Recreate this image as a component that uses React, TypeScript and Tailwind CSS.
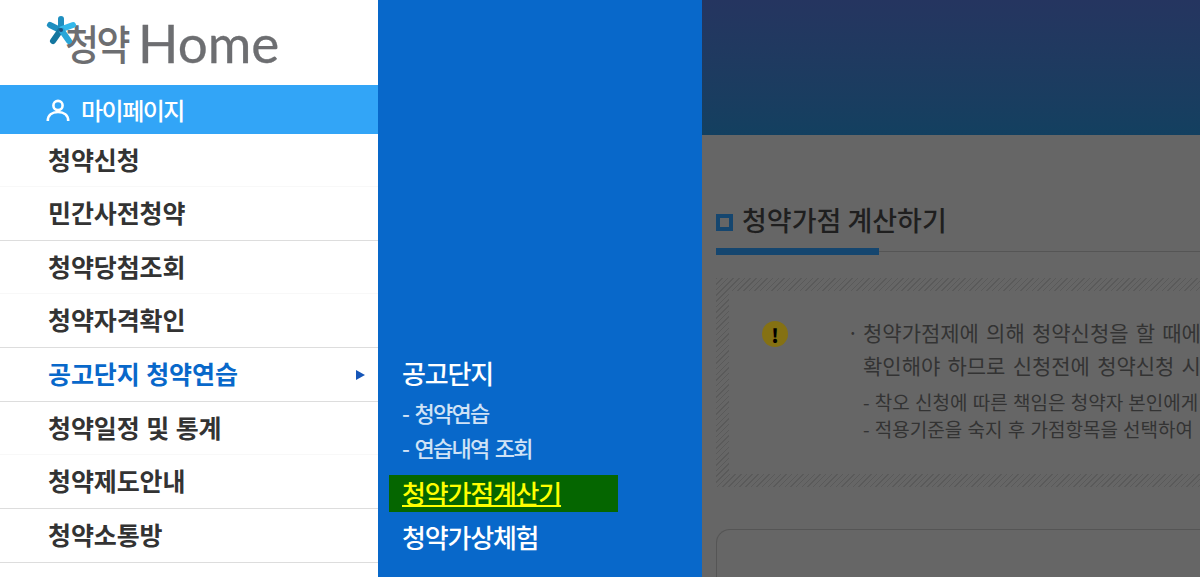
const KR = "font-['Noto_Sans_CJK_KR','Noto_Sans',sans-serif]";

const menu = [
  { label: '청약신청', h: 'h-[53px]', line: 'border-[#f8f8f8]' },
  { label: '민간사전청약', h: 'h-[54px]', line: 'border-[#dddddd]' },
  { label: '청약당첨조회', h: 'h-[53px]', line: 'border-[#f8f8f8]' },
  { label: '청약자격확인', h: 'h-[54px]', line: 'border-[#dddddd]' },
  { label: '공고단지 청약연습', h: 'h-[54px]', line: 'border-[#dddddd]', active: true },
  { label: '청약일정 및 통계', h: 'h-[53px]', line: 'border-[#f8f8f8]' },
  { label: '청약제도안내', h: 'h-[54px]', line: 'border-[#dddddd]' },
  { label: '청약소통방', h: 'h-[54px]', line: 'border-[#dddddd]' },
];

function Logo() {
  return (
    <div className="relative flex h-[85px] items-start pl-[65px] pt-[13px] text-[#6d6e71]">
      <div className={`mt-[6px] w-[64px] origin-bottom scale-y-[1.12] text-[37px] font-medium leading-[52px] tracking-[-2.500px] whitespace-nowrap ${KR}`}>청약</div>
      <div className="ml-[9px] text-[53px] font-normal leading-[60px] font-['Lato','Noto_Sans',sans-serif] [-webkit-text-stroke:0.3px_#6d6e71]">
        Home
      </div>
      <svg className="absolute left-[46px] top-[15px]" width="32" height="32" viewBox="0 0 32 32">
        <g strokeWidth="6" strokeLinecap="round">
          <path d="M15 4 L15 14" stroke="#1f8fc0" />
          <path d="M4 10 L14 15" stroke="#1f8fc0" />
          <path d="M27 10 L16 14" stroke="#33b8ea" />
          <path d="M7 26 L14 16" stroke="#14769f" />
          <path d="M23 26 L16 16" stroke="#2aa6d8" />
        </g>
        <circle cx="15" cy="15" r="2" fill="#1d4f80" />
      </svg>
    </div>
  );
}

function Sidebar() {
  return (
    <div className="w-[378px] shrink-0 bg-white">
      <Logo />
      <div className={`flex h-[49px] items-center bg-[#32a5f7] pl-[46px] text-white ${KR}`}>
        <svg width="24" height="26" viewBox="0 0 24 26" fill="none" stroke="white" strokeWidth="2.6">
          <circle cx="12" cy="8.5" r="4.6" />
          <path d="M1.800 24c0-5.800 4.400-9 10.200-9s10.200 3.200 10.200 9" />
        </svg>
        <span className="ml-[11px] text-[24px] font-medium tracking-[-1.5px]">마이페이지</span>
      </div>
      {menu.map((m) => (
        <div
          key={m.label}
          className={`flex items-center justify-between border-b pl-[48px] pr-[13px] ${m.h} ${m.line} ${KR}`}
        >
          <span
            className={`pb-[1px] text-[25px] font-bold tracking-[-0.1px] [word-spacing:1px] ${m.active ? 'text-[#0868ca]' : 'text-[#333333]'}`}
          >
            {m.label}
          </span>
          {m.active && (
            <svg width="9" height="10" viewBox="0 0 9 10">
              <path d="M0 0 L9 5 L0 10 Z" fill="#1656b8" />
            </svg>
          )}
        </div>
      ))}
    </div>
  );
}

function SubPanel() {
  return (
    <div className={`flex w-[324px] shrink-0 flex-col bg-[#0868ca] pl-[11px] pt-[352px] text-white ${KR}`}>
      <div className="flex h-[40px] items-center pl-[13px] text-[26px] font-medium tracking-[-1.2px]">공고단지</div>
      <div className="mt-[3px] flex h-[35px] items-center pl-[13px] text-[22px] font-medium tracking-[-1.7px] text-[#cfe2f6] [word-spacing:3px]">- 청약연습</div>
      <div className="flex h-[35px] items-center pl-[13px] text-[22px] font-medium tracking-[-1.7px] text-[#cfe2f6] [word-spacing:3px]">- 연습내역 조회</div>
      <div className="mt-[10px] flex h-[37px] w-[229px] items-center bg-[#056600] pb-[3px] pl-[13px] text-[26px] font-medium tracking-[-1.2px] text-[#ffff00] underline underline-offset-1">
        청약가점계산기
      </div>
      <div className="flex h-[48px] items-center pl-[13px] text-[26px] font-medium tracking-[-1.2px]">청약가상체험</div>
    </div>
  );
}

function Content() {
  return (
    <div className={`min-w-0 flex-1 overflow-hidden bg-[#666666] ${KR}`}>
      <div className="h-[135px] bg-gradient-to-b from-[#253560] to-[#134060]" />
      <div className="w-[700px] pl-[14px]">
        <div className="mt-[67px] flex h-[46px] items-center gap-[9px] pb-[6px]">
          <div className="h-[17px] w-[17px] border-[4px] border-[#15466f]" />
          <span className="mb-[3px] text-[27px] font-medium tracking-[0px] text-[#1f1f1f]">청약가점 계산하기</span>
        </div>
        <div className="relative h-[7px]">
          <div className="absolute left-0 right-0 top-[3px] h-px bg-[#555555]" />
          <div className="absolute left-0 top-0 h-[7px] w-[163px] bg-[#15466f]" />
        </div>
        <div className="mt-[23px] h-[209px] bg-[repeating-linear-gradient(135deg,#5a5a5a_0,#5a5a5a_1px,#666666_1px,#666666_4px)] p-[13px]">
          <div className="flex h-full bg-[#666666] pt-[25px]">
            <div className="ml-[33px] mt-[5px] flex h-[26px] w-[26px] shrink-0 items-center justify-center rounded-full bg-[#857113] text-[19px] font-black leading-none text-black">
              !
            </div>
            <div className="ml-[59px] whitespace-nowrap text-[#333333]">
              <div className="flex text-[21px] leading-[33px] [word-spacing:2.5px]">
                <span className="w-[16px]">·</span>
                <div>
                  <div>청약가점제에 의해 청약신청을 할 때에</div>
                  <div>확인해야 하므로 신청전에 청약신청 시</div>
                </div>
              </div>
              <div className="ml-[16px] mt-[6px] text-[19px] leading-[27px] [word-spacing:1px]">
                <div>- 착오 신청에 따른 책임은 청약자 본인에게</div>
                <div>- 적용기준을 숙지 후 가점항목을 선택하여</div>
              </div>
            </div>
          </div>
        </div>
        <div className="mt-[42px] h-[60px] rounded-tl-[14px] border-l border-t border-[#555555]" />
      </div>
    </div>
  );
}

export default function App() {
  return (
    <div className="flex h-[577px] w-[1200px] overflow-hidden">
      <Sidebar />
      <SubPanel />
      <Content />
    </div>
  );
}
